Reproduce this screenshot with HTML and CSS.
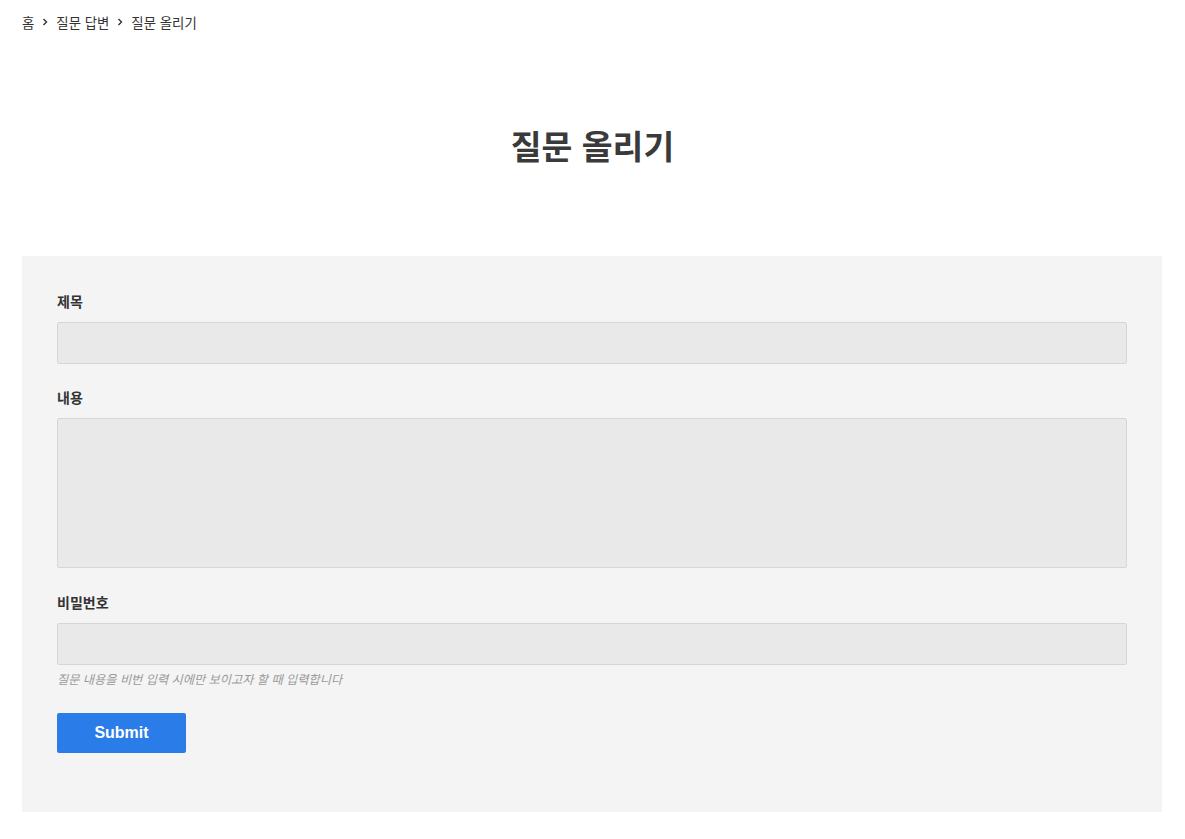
FILE: index.html
```html
<!DOCTYPE html>
<html lang="ko">
<head>
<meta charset="utf-8">
<title>질문 올리기</title>
<link rel="stylesheet" href="styles.css">
</head>
<body>
<nav class="breadcrumb">
  <span class="crumb">홈</span>
  <svg class="chev" viewBox="0 0 10 10" width="10" height="10"><path d="M3.5 2 L6.5 5 L3.5 8" fill="none" stroke="#333" stroke-width="1.4"/></svg>
  <span class="crumb">질문 답변</span>
  <svg class="chev" viewBox="0 0 10 10" width="10" height="10"><path d="M3.5 2 L6.5 5 L3.5 8" fill="none" stroke="#333" stroke-width="1.4"/></svg>
  <span class="crumb">질문 올리기</span>
</nav>
<h1 class="page-title">질문 올리기</h1>
<form class="panel">
  <div class="field field-title">
    <label class="label" for="t">제목</label>
    <input class="input" id="t" type="text">
  </div>
  <div class="field field-content">
    <label class="label" for="c">내용</label>
    <textarea class="input textarea" id="c"></textarea>
  </div>
  <div class="field field-pass">
    <label class="label" for="p">비밀번호</label>
    <input class="input" id="p" type="password">
    <p class="help">질문 내용을 비번 입력 시에만 보이고자 할 때 입력합니다</p>
  </div>
  <button class="submit" type="button">Submit</button>
</form>
</body>
</html>
```
FILE: styles.css
```css
* { box-sizing: border-box; }
body {
  margin: 0;
  font-family: "Noto Sans CJK KR", "Noto Sans", sans-serif;
  color: #333;
  background: #fff;
}
.breadcrumb {
  display: flex;
  align-items: center;
  gap: 6px;
  padding: 12px 22px;
  height: 44px;
  font-size: 13.4px;
  line-height: 20px;
  color: #333;
}
.chev { display: block; }
.page-title {
  margin: 78px 0 88px;
  text-align: center;
  font-size: 33.5px;
  line-height: 46px;
  font-weight: 700;
  color: #3a3a3a;
}
.panel {
  margin: 0 23px 0 22px;
  background: #f4f4f4;
  padding: 35px 35px 59px;
}
.field { margin-bottom: 24px; }
.field-title { margin-bottom: 23px; }
.field-content { margin-bottom: 24px; }
.field-pass { margin-bottom: 25px; }
.label {
  display: block;
  font-size: 14px;
  line-height: 20px;
  font-weight: 700;
  color: #333;
  margin-bottom: 11px;
}
.input {
  display: block;
  width: 100%;
  height: 42px;
  background: #e9e9e9;
  border: 1px solid #d6d6d6;
  border-radius: 2px;
  margin: 0;
  padding: 8px 10px;
  font: inherit;
}
.textarea { height: 150px; resize: none; }
.help {
  margin: 5px 0 0;
  font-size: 12.2px;
  line-height: 18px;
  font-style: italic;
  color: #9a9a9a;
}
.submit {
  display: block;
  width: 129px;
  height: 40px;
  background: #2a7de9;
  color: #fff;
  border: none;
  border-radius: 2px;
  font-family: "Liberation Sans", Arial, sans-serif;
  font-weight: 700;
  font-size: 16px;
}
```
